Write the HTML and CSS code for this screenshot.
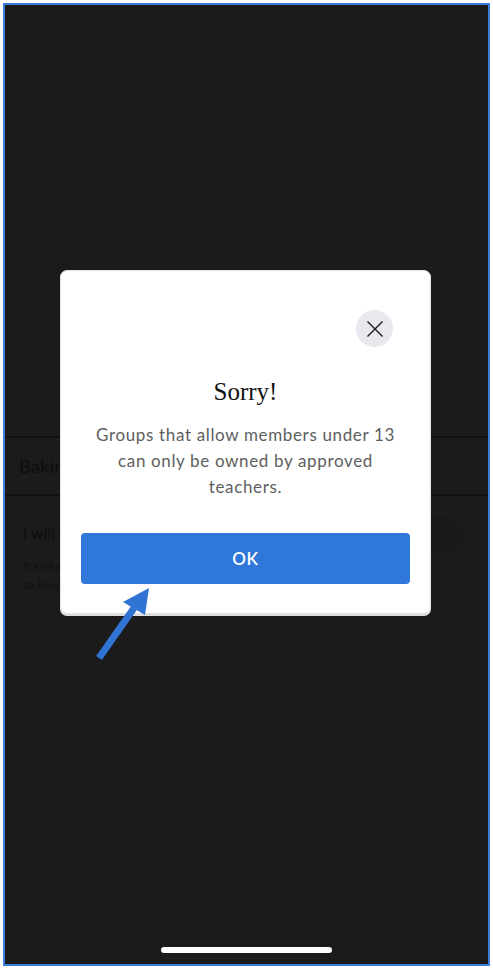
FILE: index.html
```html
<!DOCTYPE html>
<html lang="en">
<head>
    <meta charset="UTF-8">
    <meta name="viewport" content="width=device-width, initial-scale=1.0">
    <title>Sorry!</title>
    <link rel="stylesheet" href="styles.css">
</head>
<body>
    <div class="phone">
        <div class="backdrop">
            <div class="group-row">Baking Club</div>
            <div class="setting">
                <div class="setting-text">
                    <p class="setting-title">I will only allow members over 13</p>
                    <p class="setting-note">It's okay if you aren't sure yet, you'll be able<br>to keep changing this later.</p>
                </div>
                <span class="toggle"></span>
            </div>
        </div>

        <div class="home-bar"></div>

        <div class="modal">
            <div class="modal-head">
                <button class="close-btn" aria-label="Close">
                    <svg width="18" height="18" viewBox="0 0 18 18">
                        <path d="M1.5 1.5 L16.5 16.5 M16.5 1.5 L1.5 16.5" stroke="#1a1a1a" stroke-width="1.4" fill="none"/>
                    </svg>
                </button>
            </div>
            <h2 class="modal-title">Sorry!</h2>
            <p class="modal-text">Groups that allow members under 13 can only be owned by approved teachers.</p>
            <button class="ok-btn">OK</button>
        </div>

        <svg class="pointer" width="70" height="82" viewBox="0 0 70 82">
            <line x1="9" y1="73" x2="44" y2="23" stroke="#2f74d3" stroke-width="7"/>
            <polygon points="59,3 33,17 55,30" fill="#2f74d3"/>
        </svg>
    </div>
</body>
</html>
```

FILE: styles.css
```css
body {
    margin: 3px 3px 4px 3px;
    background-color: #ffffff;
    font-family: 'Lato', sans-serif;
}

.phone {
    position: relative;
    box-sizing: border-box;
    width: 487px;
    height: 963px;
    border: 2px solid #3a7ddb;
    background-color: #1b1b1b;
    display: flex;
    flex-direction: column;
    overflow: hidden;
}

/* content behind the dark overlay */
.backdrop {
    margin-top: 431px;
    color: #0e0e0e;
}

.group-row {
    border-top: 2px solid #111111;
    border-bottom: 2px solid #111111;
    height: 56px;
    padding-left: 14px;
    display: flex;
    align-items: center;
    font-size: 18px;
    letter-spacing: 0.4px;
}

.setting {
    display: flex;
    justify-content: space-between;
    align-items: flex-start;
    padding: 28px 25px 0 18px;
}

.setting-title {
    margin: 0;
    font-size: 15px;
    letter-spacing: 0.3px;
}

.setting-note {
    margin: 14px 0 0 0;
    font-size: 11.5px;
    line-height: 19px;
    letter-spacing: 0.3px;
    color: #111111;
}

.toggle {
    width: 42px;
    height: 34px;
    border-radius: 17px;
    background-color: #191919;
    margin-top: -8px;
}

.home-bar {
    margin: auto auto 11px auto;
    width: 171px;
    height: 6px;
    border-radius: 3px;
    background-color: #ffffff;
}

.modal {
    position: absolute;
    left: 55px;
    top: 265px;
    box-sizing: border-box;
    width: 371px;
    height: 344px;
    background-color: #ffffff;
    border: 1px solid #e2e2e2;
    border-radius: 7px;
    box-shadow: 0 2px 0 #dedede;
    padding: 39px 20px 0 20px;
    text-align: center;
}

.modal-head {
    display: flex;
    justify-content: flex-end;
    padding-right: 17px;
}

.close-btn {
    width: 37px;
    height: 37px;
    border-radius: 50%;
    border: none;
    padding: 0;
    background-color: #e8e9ef;
    display: flex;
    align-items: center;
    justify-content: center;
}

.modal-title {
    margin: 30px 0 0 0;
    font-family: 'Liberation Serif', serif;
    font-weight: normal;
    font-size: 25px;
    line-height: 30px;
    color: #111111;
}

.modal-text {
    margin: 15px 0 0 0;
    padding: 0 8px;
    font-size: 17px;
    line-height: 26px;
    letter-spacing: 0.65px;
    color: #5e5e5e;
}

.ok-btn {
    margin-top: 33px;
    width: 100%;
    height: 51px;
    border: none;
    border-radius: 4px;
    background-color: #2f78d9;
    color: #ffffff;
    font-family: 'Lato', sans-serif;
    font-size: 17px;
    font-weight: 600;
    letter-spacing: 0.6px;
}

.pointer {
    position: absolute;
    left: 85px;
    top: 580px;
}
```
